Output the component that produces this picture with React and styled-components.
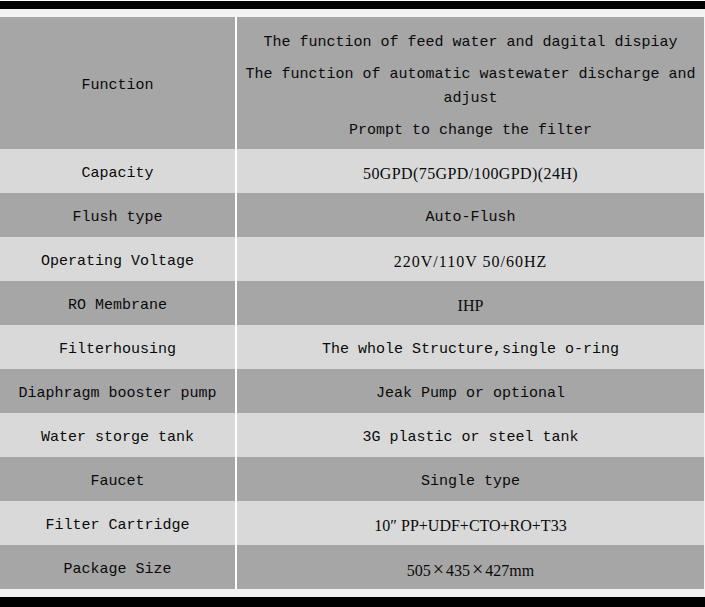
import styled, { createGlobalStyle } from "styled-components";

const GlobalStyle = createGlobalStyle`
  html, body {
    margin: 0;
    padding: 0;
    background: #ffffff;
  }
`;

const Frame = styled.div`
  margin-top: 1px;
  width: 705px;
  border-top: 8px solid #000;
  border-bottom: 10px solid #000;
  background: #f2f2f2;
  padding: 8px 0 8px;
`;

const Table = styled.div`
  width: 704px;
  display: flex;
  flex-direction: column;
`;

const Row = styled.div`
  display: grid;
  grid-template-columns: 235px 1fr;
  column-gap: 2px;
  background: #ffffff;
  min-height: 44px;
`;

const Cell = styled.div`
  background: ${(props) => (props.$light ? "#d9d9d9" : "#a6a6a6")};
  color: #0a0a0a;
  display: flex;
  flex-direction: column;
  align-items: center;
  justify-content: center;
  text-align: center;
  padding-top: 5px;
  font-family: ${(props) =>
    props.$serif
      ? '"Liberation Serif", "Times New Roman", serif'
      : '"Liberation Mono", "Courier New", monospace'};
  font-size: ${(props) => (props.$serif ? "16px" : "15px")};
  letter-spacing: ${(props) => props.$spacing || "0"};
  line-height: 24px;
`;

const FunctionList = styled(Cell)`
  padding: 14px 8px 6px;
  gap: 8px;
`;

const Line = styled.div``;

const Cross = styled.span`
  font-size: 20px;
  margin: 0 2px;
`;

const rows = [
  { label: "Capacity", value: "50GPD(75GPD/100GPD)(24H)", serif: true, spacing: "0.4px" },
  { label: "Flush type", value: "Auto-Flush" },
  { label: "Operating Voltage", value: "220V/110V 50/60HZ", serif: true, spacing: "1px" },
  { label: "RO Membrane", value: "IHP", serif: true },
  { label: "Filterhousing", value: "The whole Structure,single o-ring" },
  { label: "Diaphragm booster pump", value: "Jeak Pump or optional" },
  { label: "Water storge tank", value: "3G plastic or steel tank" },
  { label: "Faucet", value: "Single type" },
  { label: "Filter Cartridge", value: "10″ PP+UDF+CTO+RO+T33", serif: true },
  {
    label: "Package Size",
    value: (
      <span>
        505<Cross>×</Cross>435<Cross>×</Cross>427mm
      </span>
    ),
    serif: true,
  },
];

export default function App() {
  return (
    <>
      <GlobalStyle />
      <Frame>
        <Table>
          <Row>
            <Cell>Function</Cell>
            <FunctionList>
              <Line>The function of feed water and dagital dispiay</Line>
              <Line>
                The function of automatic wastewater discharge and adjust
              </Line>
              <Line>Prompt to change the filter</Line>
            </FunctionList>
          </Row>
          {rows.map((r, i) => (
            <Row key={r.label}>
              <Cell $light={i % 2 === 0}>{r.label}</Cell>
              <Cell $light={i % 2 === 0} $serif={r.serif} $spacing={r.spacing}>
                {r.value}
              </Cell>
            </Row>
          ))}
        </Table>
      </Frame>
    </>
  );
}
